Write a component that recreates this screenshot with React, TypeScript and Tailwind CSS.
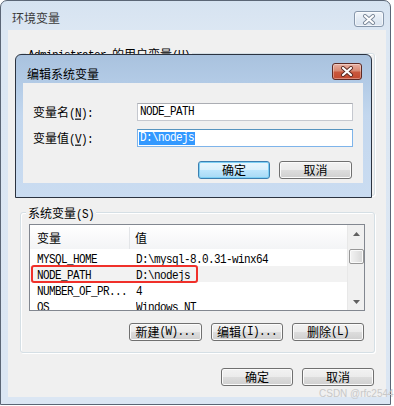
import React from "react";

const CJK = "font-['Noto_Sans_CJK_SC',sans-serif] text-[12px]";
const MONO = "font-['Liberation_Mono',monospace] text-[11px] tracking-[-0.6px] inline-block scale-y-[1.15]";

function M({ t }: { t: string }) {
  const parts = t.split(/([\u4e00-\u9fff]+)/).filter((p) => p.length > 0);
  return (
    <>
      {parts.map((p, i) =>
        /[\u4e00-\u9fff]/.test(p) ? (
          <span key={i} className={CJK}>
            {p}
          </span>
        ) : (
          <span key={i} className={MONO + " whitespace-pre"}>
            {p}
          </span>
        )
      )}
    </>
  );
}

function CloseX({ active }: { active: boolean }) {
  return (
    <div
      className={
        active
          ? "w-[30px] h-[17px] rounded-[3px] border border-[#5e2a24] bg-[linear-gradient(to_bottom,#e8b0a2_0%,#d88a74_45%,#c9573c_55%,#c34a30_100%)] shadow-[inset_0_0_0_1px_rgba(255,255,255,0.35)] flex items-center justify-center"
          : "w-[30px] h-[16px] rounded-[3px] border border-[#8797ab] bg-[linear-gradient(to_bottom,#f1f5fa_0%,#e3ebf4_50%,#d9e3ef_100%)] shadow-[inset_0_0_0_1px_rgba(255,255,255,0.6)] flex items-center justify-center"
      }
    >
      <svg width="14" height="11" viewBox="0 0 14 11">
        <path
          d="M3 2 L11 9 M11 2 L3 9"
          stroke={active ? "#5a2a22" : "#7a8798"}
          strokeWidth="4"
          strokeLinecap="round"
          fill="none"
        />
        <path
          d="M3 2 L11 9 M11 2 L3 9"
          stroke="#ffffff"
          strokeWidth="2.2"
          strokeLinecap="round"
          fill="none"
        />
      </svg>
    </div>
  );
}

function Btn({
  label,
  def,
  w = "w-[72px]",
}: {
  label: string;
  def?: boolean;
  w?: string;
}) {
  return (
    <div
      className={
        (def
          ? "border-[#3c7fb1] bg-[linear-gradient(to_bottom,#eaf6fd_0%,#d9f0fc_50%,#bee6fd_50%,#a7d9f5_100%)] shadow-[inset_0_0_0_1px_#7fd0f4]"
          : "border-[#707070] bg-[linear-gradient(to_bottom,#f2f2f2_0%,#ebebeb_50%,#dddddd_50%,#cfcfcf_100%)] shadow-[inset_0_0_0_1px_#fbfbfb]") +
        " " +
        w +
        " h-[18px] border rounded-[3px] flex items-center justify-center text-black leading-[14px]"
      }
    >
      <M t={label} />
    </div>
  );
}

function GroupLabel({ children }: { children: React.ReactNode }) {
  return (
    <span className="absolute left-[5px] -top-[8px] px-[2px] h-[14px] leading-[14px] bg-[#f0f0f0] text-black whitespace-nowrap">
      {children}
    </span>
  );
}

const rows: [string, string][] = [
  ["MYSQL_HOME", "D:\\mysql-8.0.31-winx64"],
  ["NODE_PATH", "D:\\nodejs"],
  ["NUMBER_OF_PR...", "4"],
  ["OS", "Windows_NT"],
];

export default function App() {
  return (
    <div className="relative w-[394px] h-[406px] bg-white overflow-hidden">
      {/* Outer window: 环境变量 */}
      <div className="w-[391px] h-[405px] border border-[#5b6676] rounded-t-[7px] bg-[linear-gradient(to_bottom,#d6e3f1_0px,#dce7f3_30px,#dbe6f3_100%)] flex flex-col">
        <div className="h-[29px] flex items-start justify-between pl-[11px] pr-[6px]">
          <span className={CJK + " mt-[10px] leading-[14px] text-[#3a3a3a]"}>环境变量</span>
          <div className="mt-[10px]">
            <CloseX active={false} />
          </div>
        </div>
        <div className="ml-[7px] mr-[4px] h-[367px] bg-[#f0f0f0] flex flex-col">
          {/* user variables group (mostly hidden) */}
          <div className="relative mt-[23px] ml-[12px] w-[355px] h-[143px] shrink-0 border border-[#d5dfe5] rounded-[3px] shadow-[inset_1px_1px_0_#fff,1px_1px_0_#fff]">
            <GroupLabel>
              <M t="Administrator 的用户变量(U)" />
            </GroupLabel>
          </div>
          {/* system variables group */}
          <div className="relative mt-[16px] ml-[12px] w-[355px] shrink-0 border border-[#d5dfe5] rounded-[3px] shadow-[inset_1px_1px_0_#fff,1px_1px_0_#fff] pt-[11px] pb-[11px]">
            <GroupLabel>
              <M t="系统变量(S)" />
            </GroupLabel>
            <div className="relative ml-[8px] w-[336px] h-[87px] border border-[#828790] bg-white flex">
              <div className="flex-1 flex flex-col overflow-hidden">
                <div className="h-[24px] flex items-center pt-[2px] bg-[linear-gradient(to_bottom,#ffffff,#f3f4f6)] shrink-0">
                  <div className="w-[100px] h-full flex items-center pl-[7px] border-r border-[#e3e5e8]">
                    <M t="变量" />
                  </div>
                  <div className="pl-[5px] flex items-center">
                    <M t="值" />
                  </div>
                </div>
                <div className="mt-[1px] flex flex-col">
                  {rows.map(([k, v], i) => (
                    <div
                      key={k}
                      className={
                        "h-[16px] flex items-center shrink-0 text-black leading-[14px] " +
                        (i === 1 ? "bg-[#f2f2f2]" : "bg-white")
                      }
                    >
                      <div className="w-[100px] pl-[7px] whitespace-nowrap">
                        <span className={MONO}>{k}</span>
                      </div>
                      <div className="pl-[6px] whitespace-nowrap">
                        <span className={MONO}>{v}</span>
                      </div>
                    </div>
                  ))}
                </div>
              </div>
              {/* scrollbar */}
              <div className="w-[17px] h-full bg-[#f0f0f0] border-l border-[#e8e8e8] flex flex-col items-center">
                <div className="h-[17px] flex items-center justify-center">
                  <svg width="7" height="4" viewBox="0 0 7 4">
                    <path d="M0 4 L3.5 0 L7 4 Z" fill="#606060" />
                  </svg>
                </div>
                <div className="mt-[7px] w-[15px] h-[15px] rounded-[2px] border border-[#979797] bg-[linear-gradient(to_right,#f3f3f3,#e6e6e6_50%,#d7d7d7)] shadow-[inset_0_0_0_1px_#fafafa]" />
                <div className="flex-1" />
                <div className="h-[17px] flex items-center justify-center">
                  <svg width="7" height="4" viewBox="0 0 7 4">
                    <path d="M0 0 L3.5 4 L7 0 Z" fill="#606060" />
                  </svg>
                </div>
              </div>
              {/* red annotation */}
              <div className="absolute left-[1px] top-[40px] w-[167px] h-[18px] border-2 border-[#f0302a] rounded-[3px]" />
            </div>
            <div className="mt-[12px] flex justify-end gap-[9px] pr-[10px]">
              <Btn label="新建(W)..." w="w-[73px]" />
              <Btn label="编辑(I)..." />
              <Btn label="删除(L)" />
            </div>
          </div>
          <div className="mt-[15px] flex justify-end gap-[9px] pr-[12px]">
            <Btn label="确定" />
            <Btn label="取消" />
          </div>
        </div>
      </div>

      {/* Inner dialog: 编辑系统变量 */}
      <div className="absolute left-[15px] top-[54px] w-[357px] h-[144px] border border-[#2b3340] rounded-t-[6px] bg-[linear-gradient(to_bottom,#a9c2de_0px,#b3cbe6_28px,#c3d7ee_60px,#cadcf1_100%)] flex flex-col">
        <div className="h-[28px] flex items-start justify-between pl-[11px] pr-[9px] shrink-0">
          <span className={CJK + " mt-[12px] leading-[14px] text-black"}>编辑系统变量</span>
          <div className="mt-[8px]">
            <CloseX active={true} />
          </div>
        </div>
        <div className="ml-[7px] mr-[8px] h-[100px] bg-[#f0f0f0] pt-[20px] pl-[10px] pr-[10px] text-black">
          <div className="flex items-center h-[18px]">
            <div className="w-[104px] leading-[14px] whitespace-nowrap">
              <span className={CJK}>变量名</span>
              <span className={MONO}>
                (<span className="underline">N</span>):
              </span>
            </div>
            <div className="w-[216px] h-[18px] bg-white border border-[#c5c8cf] border-t-[#abadb3] flex items-center pl-[2px] leading-[14px]">
              <span className={MONO}>NODE_PATH</span>
            </div>
          </div>
          <div className="mt-[8px] flex items-center h-[18px]">
            <div className="w-[104px] leading-[14px] whitespace-nowrap">
              <span className={CJK}>变量值</span>
              <span className={MONO}>
                (<span className="underline">V</span>):
              </span>
            </div>
            <div className="w-[216px] h-[18px] bg-white border border-[#7eb4ea] border-t-[#5794bf] flex items-center pl-[1px] leading-[14px]">
              <span className="bg-[#3399ff] text-white px-[1px] h-[13px] leading-[13px] inline-flex items-center">
                <span className={MONO}>D:\nodejs</span>
              </span>
            </div>
          </div>
          <div className="mt-[14px] flex justify-end gap-[9px] pr-[1px]">
            <Btn label="确定" def />
            <Btn label="取消" w="w-[73px]" />
          </div>
        </div>
      </div>

      {/* watermark */}
      <span className="absolute left-[319px] top-[388px] font-['Liberation_Sans',sans-serif] text-[10px] leading-[12px] text-[#c8c8c8] whitespace-nowrap">
        CSDN @rfc2544
      </span>
    </div>
  );
}
